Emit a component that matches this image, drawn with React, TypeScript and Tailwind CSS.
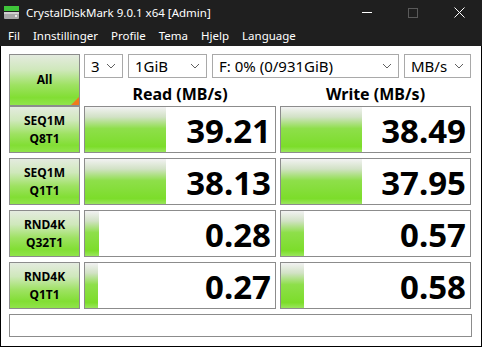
import React from 'react';

type Row = { top: string; bottom: string; read: string; write: string; readBar: number; writeBar: number };

const rows: Row[] = [
  { top: 'SEQ1M', bottom: 'Q8T1', read: '39.21', write: '38.49', readBar: 81, writeBar: 81 },
  { top: 'SEQ1M', bottom: 'Q1T1', read: '38.13', write: '37.95', readBar: 81, writeBar: 81 },
  { top: 'RND4K', bottom: 'Q32T1', read: '0.28', write: '0.57', readBar: 14, writeBar: 23 },
  { top: 'RND4K', bottom: 'Q1T1', read: '0.27', write: '0.58', readBar: 13, writeBar: 23 },
];

const font = "font-['Noto_Sans','Open_Sans',sans-serif]";
const btnGrad = 'bg-[linear-gradient(to_bottom,#e4ebdf_0%,#cfe8bb_30%,#9ee262_60%,#82de34_85%,#90e44a_100%)]';
const barGrad = 'bg-[linear-gradient(to_bottom,#f2f2f2_0%,#d2e2c6_22%,#8edf4a_48%,#7cdd2a_88%,#9ae65c_100%)]';

const Combo = ({ label, w }: { label: string; w: string }) => (
  <div className={`${w} h-6 border border-[#a9a9a9] bg-white flex items-center justify-between pl-1.5 pr-1.5 text-[15px] text-black leading-none`}>
    <span>{label}</span>
    <svg width="10" height="6" viewBox="0 0 10 6" className="shrink-0">
      <path d="M1 1l4 4 4-4" fill="none" stroke="#606060" strokeWidth="1" />
    </svg>
  </div>
);

const Result = ({ value, bar }: { value: string; bar: number }) => (
  <div className="relative h-[47px] border border-[#8c8c8c] bg-white flex items-center justify-end pr-1">
    <div className={`absolute left-0 top-0 bottom-0 ${barGrad}`} style={{ width: bar }} />
    <span className="relative text-[33px] font-bold leading-none text-black pt-[1px]">{value}</span>
  </div>
);

export default function App() {
  return (
    <div className={`w-[482px] h-[347px] bg-white flex flex-col ${font} overflow-hidden`}>
      <div className="h-[25px] bg-[#1f1f1f] flex items-center text-white text-[11.5px]">
        <svg width="16" height="16" viewBox="0 0 16 16" className="ml-[4px] mr-[6px]">
          <rect x="0" y="1" width="15" height="5" fill="#3fc53a" />
          <rect x="0" y="7" width="15" height="7" rx="1" fill="#a8a8a8" />
          <rect x="0" y="7" width="15" height="2" fill="#d0d0d0" />
          <circle cx="12" cy="11" r="1" fill="#ffffff" />
        </svg>
        <span>CrystalDiskMark 9.0.1 x64 [Admin]</span>
        <div className="ml-auto flex items-center h-full">
          <div className="w-[46px] h-full flex items-center justify-center">
            <div className="w-[10px] h-px bg-white" />
          </div>
          <div className="w-[46px] h-full flex items-center justify-center">
            <div className="w-[10px] h-[10px] border border-[#5a5a5a]" />
          </div>
          <div className="w-[46px] h-full flex items-center justify-center">
            <svg width="11" height="11" viewBox="0 0 11 11">
              <path d="M0.5 0.5l10 10M10.5 0.5l-10 10" stroke="#ffffff" strokeWidth="1" />
            </svg>
          </div>
        </div>
      </div>
      <div className="h-[21px] bg-[#1f1f1f] flex items-center text-white text-[11.5px] pl-[8px] gap-[13px]">
        <span>Fil</span>
        <span>Innstillinger</span>
        <span>Profile</span>
        <span>Tema</span>
        <span>Hjelp</span>
        <span>Language</span>
      </div>
      <div className="flex-1 border-l border-r border-b border-black pt-[8px] pl-[8px] pr-[8px] flex flex-col gap-[5px]">
        <div className="grid grid-cols-[71px_192px_191px] gap-x-[4px] h-[47px]">
          <div className={`relative border border-[#8c8c8c] ${btnGrad} flex items-center justify-center text-[12px] font-bold text-black`}>
            All
            <div className="absolute right-0 bottom-0 w-0 h-0 border-l-[8px] border-l-transparent border-b-[8px] border-b-[#f07a1c]" />
          </div>
          <div className="col-span-2 flex flex-col">
            <div className="flex gap-[5px]">
              <Combo label="3" w="w-[39px]" />
              <Combo label="1GiB" w="w-[79px]" />
              <Combo label="F: 0% (0/931GiB)" w="w-[187px]" />
              <Combo label="MB/s" w="w-[67px]" />
            </div>
            <div className="grid grid-cols-[192px_191px] gap-x-[4px] flex-1 items-center text-[16px] font-bold text-black">
              <div className="text-center pt-[4px]">Read (MB/s)</div>
              <div className="text-center pt-[4px]">Write (MB/s)</div>
            </div>
          </div>
        </div>
        {rows.map((r, i) => (
          <div key={i} className="grid grid-cols-[71px_192px_191px] gap-x-[4px] h-[47px]">
            <div className={`border border-[#8c8c8c] ${btnGrad} flex flex-col items-center justify-center text-[12px] font-bold text-black leading-[18px]`}>
              <span>{r.top}</span>
              <span>{r.bottom}</span>
            </div>
            <Result value={r.read} bar={r.readBar} />
            <Result value={r.write} bar={r.writeBar} />
          </div>
        ))}
        <div className="w-[463px] h-[23px] border border-[#8c8c8c] bg-white" />
      </div>
    </div>
  );
}
